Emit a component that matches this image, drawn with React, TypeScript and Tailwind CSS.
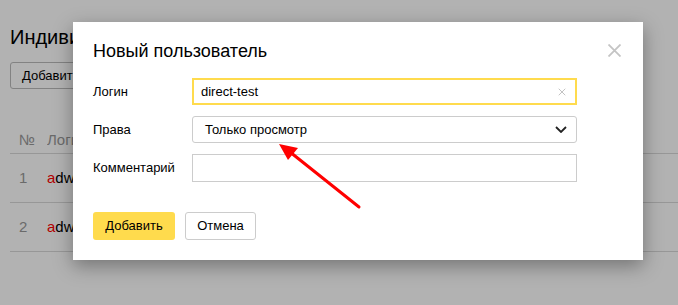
import { X } from "lucide-react";

const font = { fontFamily: '"Liberation Sans", Arial, sans-serif' };

function Backdrop() {
  return (
    <div className="pl-[10px]">
      <h1 className="w-[63px] overflow-hidden whitespace-nowrap pt-[25px] text-[20px] leading-6 text-black">
        Индиви
      </h1>
      <div className="mt-[13px]">
        <button className="h-[27px] w-[80px] overflow-hidden whitespace-nowrap rounded-[3px] border border-[#bbb] pl-[11px] text-left text-[13px] text-black">
          Добавить
        </button>
      </div>
      <div className="mt-[43px] flex h-[22px] items-center border-b border-[#d9d9d9] pb-[4px] text-[15px] text-[#999]">
        <span className="w-[37px] pl-[9px]">№</span>
        <span className="w-[26px] overflow-hidden whitespace-nowrap">Логин</span>
      </div>
      {["1", "2"].map((n) => (
        <div key={n} className="flex h-[49px] items-center border-b border-[#d9d9d9] text-[15px]">
          <span className="w-[37px] pl-[9px] text-[#999]">{n}</span>
          <span className="w-[26px] overflow-hidden whitespace-nowrap text-black">
            <span className="text-[#f00]">a</span>dw
          </span>
        </div>
      ))}
    </div>
  );
}

function Modal() {
  return (
    <div className="absolute left-[73px] top-[22px] h-[238px] w-[570px] bg-white pl-[20px] pt-[17px] shadow-[0_6px_18px_rgba(0,0,0,0.35)]">
      <button className="absolute left-[535px] top-[22px]">
        <svg width="13" height="13" viewBox="0 0 13 13">
          <path d="M0.5 0.5 L12.5 12.5 M12.5 0.5 L0.5 12.5" stroke="#c4c4c4" strokeWidth="1.8" />
        </svg>
      </button>
      <h2 className="text-[18px] leading-6 text-black">Новый пользователь</h2>
      <div className="mt-[15px] grid grid-cols-[99px_385px] items-center gap-y-[11px] text-[13px] text-black">
        <span>Логин</span>
        <div className="flex h-[27px] items-center border-2 border-[#ffdb4d] pl-[7px] pr-[7px]">
          <span className="flex-1">direct-test</span>
          <X size={12} strokeWidth={1.2} className="text-[#999]" />
        </div>
        <span>Права</span>
        <div className="flex h-[27px] items-center rounded-[3px] border border-[#ccc] pl-[12px] pr-[9px]">
          <span className="flex-1">Только просмотр</span>
          <svg width="12" height="7" viewBox="0 0 12 7">
            <path d="M1 1 L6 6 L11 1" fill="none" stroke="#222" strokeWidth="1.8" />
          </svg>
        </div>
        <span>Комментарий</span>
        <div className="h-[28px] border border-[#ccc]" />
      </div>
      <div className="mt-[30px] flex gap-[10px] text-[13px] text-black">
        <button className="h-[28px] w-[82px] rounded-[3px] bg-[#ffdb4d]">Добавить</button>
        <button className="h-[28px] w-[71px] rounded-[3px] border border-[#ccc] bg-white">Отмена</button>
      </div>
    </div>
  );
}

export default function App() {
  return (
    <div className="relative h-[305px] w-[678px] overflow-hidden bg-white" style={font}>
      <Backdrop />
      <div className="absolute inset-0 bg-black/30" />
      <Modal />
      <svg className="absolute left-0 top-0" width="678" height="305">
        <line x1="359" y1="207" x2="290" y2="152" stroke="#f00" strokeWidth="3" strokeLinecap="round" />
        <polygon points="279,144 298,148 288,160" fill="#f00" />
      </svg>
    </div>
  );
}
